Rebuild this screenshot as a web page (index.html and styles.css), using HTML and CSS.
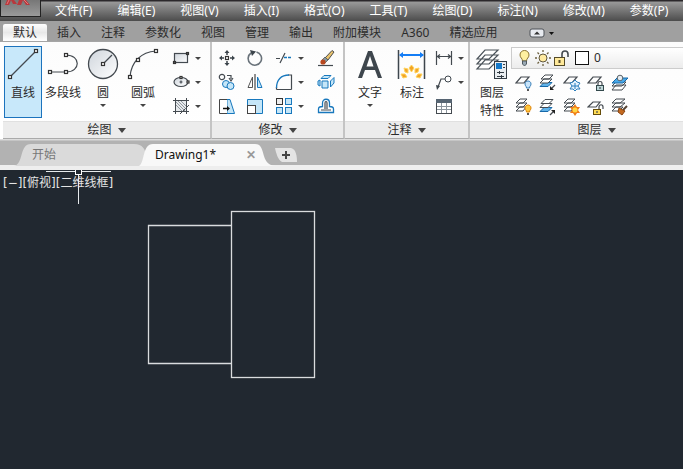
FILE: index.html
```html
<!DOCTYPE html>
<html lang="zh-CN">
<head>
<meta charset="utf-8">
<title>Drawing1</title>
<link rel="stylesheet" href="styles.css">
</head>
<body>
<header class="menubar">
  <button class="app" aria-label="应用程序"><svg width="40" height="16" viewBox="0 0 40 16"><path d="M6 0H10L8 5H4ZM10 0H13L16 4H12ZM18 0H22L20 5H16ZM22 0H25L29 5H25Z" fill="#b8383c"/><path d="M8 0L6 4M23 0L27 4" stroke="#e8797b"/></svg></button>
  <nav class="menus">
    <a href="#">文件(F)</a><a href="#">编辑(E)</a><a href="#">视图(V)</a><a href="#">插入(I)</a><a href="#">格式(O)</a><a href="#">工具(T)</a><a href="#">绘图(D)</a><a href="#">标注(N)</a><a href="#">修改(M)</a><a href="#">参数(P)</a>
  </nav>
</header>
<nav class="tabs">
  <button class="tab on">默认</button><button class="tab">插入</button><button class="tab">注释</button><button class="tab">参数化</button><button class="tab">视图</button><button class="tab">管理</button><button class="tab">输出</button><button class="tab">附加模块</button><button class="tab">A360</button><button class="tab">精选应用</button>
  <button class="collapse" aria-label="最小化"><svg width="26" height="10" viewBox="0 0 26 10"><rect x="1" y="1" width="14" height="8" rx="2" fill="#e8ebf0" stroke="#4e5258"/><path d="M5 6.500L8 3.500L11 6.500Z" fill="#333"/><path d="M20 4H25L22.500 7Z" fill="#111"/></svg></button>
</nav>
<main>
<div class="ribbon">
  <section class="panel draw">
    <div class="tools">
      <button class="big sel"><svg width="38" height="36" viewBox="0 0 38 36"><path d="M6 31L32 5" stroke="#444a50" stroke-width="1.300"/><g class="node"><rect x="4.500" y="29.500" width="3" height="3"/><rect x="30.500" y="3.500" width="3" height="3"/></g></svg><span>直线</span></button>
      <button class="big"><svg width="38" height="36" viewBox="0 0 38 36"><path d="M6 26H22M22 9C37 9 37 26 22 26" class="ln"/><g class="node"><rect x="4.500" y="24.500" width="3" height="3"/><rect x="20.500" y="24.500" width="3" height="3"/><rect x="20.500" y="7.500" width="3" height="3"/></g></svg><span>多段线</span></button>
      <button class="big"><svg width="38" height="36" viewBox="0 0 38 36"><defs><linearGradient id="g" x2="1" y2="1"><stop stop-color="#cfd5dc"/><stop offset="1" stop-color="#fff"/></linearGradient></defs><circle cx="19" cy="18" r="14.500" fill="url(#g)" stroke="#444a50" stroke-width="1.300"/><path d="M19 18L28 9" class="ln"/><g class="node"><rect x="17.500" y="16.500" width="3" height="3"/></g></svg><span>圆</span><i class="dd"></i></button>
      <button class="big"><svg width="38" height="36" viewBox="0 0 38 36"><path d="M6 31C7 16 17 6 32 5" class="ln"/><g class="node"><rect x="4.500" y="29.500" width="3" height="3"/><rect x="12.500" y="12.500" width="3" height="3"/><rect x="30.500" y="3.500" width="3" height="3"/></g></svg><span>圆弧</span><i class="dd"></i></button>
      <div class="grid one">
        <button class="sm" aria-label="矩形"><svg viewBox="0 0 18 18"><rect x="2.500" y="4.500" width="13" height="9" class="ln"/><g class="node"><rect x="1.500" y="12.500" width="2" height="2"/><rect x="14.500" y="3.500" width="2" height="2"/></g></svg><i class="dd"></i></button>
        <button class="sm" aria-label="椭圆"><svg viewBox="0 0 18 18"><ellipse cx="9" cy="9" rx="7" ry="4.500" class="ln"/><path d="M7.500 9H10.500M9 7.500V10.500" class="ln"/><g class="node"><rect x="8" y="3.500" width="2" height="2"/><rect x="15" y="8" width="2" height="2"/></g></svg><i class="dd"></i></button>
        <button class="sm" aria-label="填充"><svg viewBox="0 0 18 18"><rect x="3.500" y="3.500" width="11" height="11" fill="#e6e9ec" stroke="#444a50"/><path d="M1 3.500H17M3.500 1V17M14.500 1V17M1 14.500H17M8 17L17 8" stroke="#444a50" fill="none"/><path d="M4 8L10 14M4 5L13 14M6 4L14 12M9 4L14 9" stroke="#7b838a" stroke-width=".8"/></svg><i class="dd"></i></button>
      </div>
    </div>
    <h2>绘图 <i></i></h2>
  </section>
  <section class="panel modify">
    <div class="tools">
      <div class="grid four">
        <button class="sm" aria-label="移动"><svg viewBox="0 0 18 18"><path d="M9 2V6M9 12V16M2 9H6M12 9H16" stroke="#3c444b" stroke-width="1.500"/><path d="M6.500 4L9 1L11.500 4ZM6.500 14L9 17L11.500 14ZM4 6.500L1 9L4 11.500ZM14 6.500L17 9L14 11.500Z" fill="#3c444b"/><g class="node"><rect x="7.500" y="7.500" width="3" height="3"/></g></svg></button>
        <button class="sm" aria-label="旋转"><svg viewBox="0 0 18 18"><path d="M10.500 3A6.700 6.700 0 1 1 5 4" fill="none" stroke="#69727a" stroke-width="1.600"/><path d="M4 1L10 2.500L6 7Z" fill="#3c444b"/></svg></button>
        <button class="sm" aria-label="修剪"><svg viewBox="0 0 18 18"><path d="M1 9.500H5M5 14L10 4" class="ln"/><path d="M9 8.500H17" class="bl" stroke-dasharray="3 1"/></svg><i class="dd"></i></button>
        <button class="sm" aria-label="删除"><svg viewBox="0 0 18 18"><path d="M1 16.500H16" class="ln"/><path d="M8 9L15 1.500L17 3L11 11Z" fill="#e9c36d" stroke="#4c4c4c"/><path d="M8 8L11 11L8 14L5 11Z" fill="#8597a0" stroke="#4c4c4c" stroke-width=".7"/><circle cx="6" cy="13" r="2.600" fill="#b8481f"/></svg></button>
        <button class="sm" aria-label="复制"><svg viewBox="0 0 18 18"><circle cx="4" cy="4" r="2.700" class="ln"/><circle cx="8" cy="11" r="3.500" class="bf"/><circle cx="12.500" cy="13" r="3.500" class="bf"/><path d="M9 2.500H13V6M11 5L13 8L15 5" class="ln"/></svg></button>
        <button class="sm" aria-label="镜像"><svg viewBox="0 0 18 18"><path d="M9 1V17" stroke="#222"/><path d="M6.500 4V14.500H2Z" fill="none" stroke="#555"/><path d="M11.500 4V14.500H16Z" class="bf"/></svg></button>
        <button class="sm" aria-label="圆角"><svg viewBox="0 0 18 18"><path d="M1.500 16.500V14M16.500 16.500V2H13M1.500 16.500H16.500" class="ln"/><path d="M1.500 15C1.500 7 6 2 14 2" class="bl"/></svg><i class="dd"></i></button>
        <button class="sm" aria-label="分解"><svg viewBox="0 0 18 18"><path d="M5 8H11V15H5ZM4 5.500L7 2.500H14L11 5.500ZM13.500 8L17 4.500V10L13.500 14ZM1 8L3 7V13L1 12Z" class="bf"/></svg></button>
        <button class="sm" aria-label="拉伸"><svg viewBox="0 0 18 18"><path d="M9 2.500H12L16.500 16.500H9Z" class="bf"/><path d="M9 2.500H1.500V16.500H9" fill="#fff" stroke="#444"/><path d="M5 11.500H10" stroke="#111" stroke-width="1.500"/><path d="M9 9L12 11.500L9 14Z" fill="#111"/></svg></button>
        <button class="sm" aria-label="缩放"><svg viewBox="0 0 18 18"><path d="M1.500 2.500H16.500V16.500H9.500V8.500H1.500Z" class="bf"/><rect x="1.500" y="8.500" width="8" height="8" fill="#fff" stroke="#444"/></svg></button>
        <button class="sm" aria-label="阵列"><svg viewBox="0 0 18 18"><rect x="1.500" y="1.500" width="6" height="6" fill="#eee" stroke="#333"/><rect x="10.500" y="1.500" width="6" height="6" class="bf"/><rect x="1.500" y="10.500" width="6" height="6" class="bf"/><rect x="10.500" y="10.500" width="6" height="6" class="bf"/></svg><i class="dd"></i></button>
        <button class="sm" aria-label="偏移"><svg viewBox="0 0 18 18"><path d="M1.500 15.500V12C1.500 10 3 9.500 5.500 9.500V6C5.500 1 12.500 1 12.500 6V9.500C15 9.500 16.500 10 16.500 12V15.500Z" class="bl"/><path d="M4 13H14M8 12V6C8 4 10 4 10 6V12" class="ln"/></svg></button>
      </div>
    </div>
    <h2>修改 <i></i></h2>
  </section>
  <section class="panel note">
    <div class="tools">
      <button class="big"><svg width="38" height="36" viewBox="0 0 38 36"><path d="M7 32L17 5H21L31 32H27L24 24H14L11 32ZM15.500 20.500H22.500L19 10Z" fill="#3e464d"/></svg><span>文字</span><i class="dd"></i></button>
      <button class="big"><svg width="38" height="36" viewBox="0 0 38 36"><path d="M5.500 4V33M31.500 4V33" stroke="#3e464d" stroke-width="1.500"/><path d="M7 9H30" stroke="#147df5" stroke-width="2"/><path d="M6 9L10 6V12ZM31 9L27 6V12Z" fill="#147df5"/><path d="M18.500 19L21 22L18.500 26L16 22ZM11 22L15 23L15 27L12 26ZM26 22L22 23L22 27L25 26ZM8 28L12 28L14 31L10 32ZM29 28L25 28L23 31L27 32Z" fill="#f3a425" stroke="#ffd35c"/></svg><span>标注</span></button>
      <div class="grid one">
        <button class="sm" aria-label="线性"><svg viewBox="0 0 18 18"><path d="M1.500 2V16M16.500 2V16M2 7.500H16M5 5.500L2.500 7.500L5 9.500M13 5.500L15.500 7.500L13 9.500" class="ln"/></svg><i class="dd"></i></button>
        <button class="sm" aria-label="引线"><svg viewBox="0 0 18 18"><path d="M3 14L6 6H10" class="ln"/><path d="M1 12L5 13L2 17Z" fill="#3e464d"/><circle cx="13" cy="6" r="3" fill="#fff" stroke="#3e464d"/></svg><i class="dd"></i></button>
        <button class="sm" aria-label="表格"><svg viewBox="0 0 18 18"><rect x="1.500" y="2.500" width="15" height="14" fill="#fff" stroke="#444a50"/><path d="M1 2H17V6H1Z" fill="#566472"/><path d="M2 9.500H16M2 12.500H16M6.500 6V16M11.500 6V16" stroke="#8b949c"/></svg></button>
      </div>
    </div>
    <h2>注释 <i></i></h2>
  </section>
  <section class="panel layer">
    <div class="tools">
      <button class="big"><svg width="38" height="36" viewBox="0 0 38 36"><g fill="#fff" stroke="#4a5259" stroke-width="1.200"><path d="M4 23L12 14H25L16 23ZM4 18L12 9H25L16 18ZM4 13L12 4H25L16 13Z"/></g><rect x="21.500" y="15.500" width="12" height="17" fill="#e9edf0" stroke="#333c44"/><rect x="23" y="17" width="6" height="6" fill="#1478c8"/><path d="M30 18.500H32M30 21.500H32M24 26.500H31M26.500 25V28M24 30.500H31M28.500 29V32" stroke="#333c44"/></svg><span>图层<br>特性</span></button>
      <div class="stack">
        <button class="combo" aria-label="图层 0">
          <svg width="20" height="20" viewBox="0 0 20 20"><path d="M6 7C6 1 15 1 15 7C15 10 12.500 10 12.500 13H8.500C8.500 10 6 10 6 7Z" fill="#fff0a0" stroke="#8b7330"/><path d="M8.500 13H12.500V16L10.500 18L8.500 16Z" fill="#9aa9b4" stroke="#4e5860"/></svg>
          <svg width="18" height="20" viewBox="0 0 18 20"><circle cx="9" cy="10" r="4" fill="#ffeaa0" stroke="#5d553d"/><path d="M9 2V4M9 16V18M1 10H3M15 10H17M3.500 4.500L5 6M13 14L14.500 15.500M14.500 4.500L13 6M5 14L3.500 15.500" stroke="#6c6040" stroke-width="1.300"/></svg>
          <svg width="20" height="20" viewBox="0 0 20 20"><rect x="2.500" y="9.500" width="10" height="8" fill="#ffe99a" stroke="#544a28"/><path d="M10 9V6C10 2 16 2 16 6V9" fill="none" stroke="#454b50" stroke-width="1.600"/><path d="M7.500 12V15" stroke="#544a28" stroke-width="2"/></svg>
          <span class="swatch"></span><span>0</span>
        </button>
        <div class="grid five">
          <button class="sm" aria-label="关"><svg viewBox="0 0 18 18"><path d="M1 9L6 3H14L9 9Z" class="ln"/><path d="M10 10C10 6 16 6 16 10C16 12 14.500 12 14.500 14H11.500C11.500 12 10 12 10 10Z" fill="#c8e4fa" stroke="#397fb8"/><path d="M12 15H14V17H12Z" fill="#555"/></svg></button>
          <button class="sm" aria-label="隔离"><svg viewBox="0 0 18 18"><path d="M1 12.500L5 8.500H13L9 12.500Z" fill="#61b3ea" stroke="#1768a8"/><path d="M1 9L5 5H13L9 9ZM2 5L6 1H14L10 5Z" fill="#fff" stroke="#444a50"/><path d="M16 11L12 15" class="ln"/><path d="M11 12V16H15Z" fill="#222"/></svg></button>
          <button class="sm" aria-label="冻结"><svg viewBox="0 0 18 18"><path d="M1 9L6 3H14L9 9Z" class="ln"/><path d="M12 6L14 8L17 9L15 12L17 15L14 15L12 17L10 15L7 15L9 12L7 9L10 8Z" fill="#e2f2fd" stroke="#2c7fbd"/><path d="M12 9V15M9 12H15" stroke="#2c7fbd"/></svg></button>
          <button class="sm" aria-label="锁定"><svg viewBox="0 0 18 18"><path d="M1 9L6 3H14L9 9Z" class="ln"/><rect x="9.500" y="11.500" width="7" height="5" fill="#bdd6d8" stroke="#33494c"/><path d="M11 11V9C11 7 15 7 15 9V11M13 13V15" class="ln"/></svg></button>
          <button class="sm" aria-label="置为当前"><svg viewBox="0 0 18 18"><path d="M1 16L5 11H15L11 16ZM1 12L5 8H15L11 12Z" fill="#fff" stroke="#444a50"/><path d="M1 9L6 4H17L12 9Z" fill="#48a9e9" stroke="#1768a8"/><circle cx="9" cy="4" r="2.800" fill="#e5edf2" stroke="#596269"/></svg></button>
          <button class="sm" aria-label="打开"><svg viewBox="0 0 18 18"><path d="M1 13L5 9H11L8 13ZM1 9L5 5H12L8 9ZM1 5L5 1H12L8 5Z" fill="#fff" stroke="#444a50"/><path d="M10 10C10 6 16 6 16 10C16 12 14.500 12 14.500 14H11.500C11.500 12 10 12 10 10Z" fill="#ffc83d" stroke="#df8308"/><path d="M12 15H14V17H12Z" fill="#555"/></svg></button>
          <button class="sm" aria-label="取消隔离"><svg viewBox="0 0 18 18"><path d="M1 13.500L5 9.500H13L9 13.500Z" fill="#61b3ea" stroke="#1768a8"/><path d="M1 9.500L5 5.500H13L9 9.500ZM2 5.500L6 1.500H14L10 5.500Z" fill="#fff" stroke="#444a50"/><path d="M11 17L15 13" class="ln"/><path d="M12 12H16V16Z" fill="#222"/></svg></button>
          <button class="sm" aria-label="解冻"><svg viewBox="0 0 18 18"><path d="M1 13L5 9H11L8 13ZM1 9L5 5H12L8 9ZM1 5L5 1H12L8 5Z" fill="#fff" stroke="#444a50"/><path d="M12 6L14 9L17 9L15 12L17 15L14 15L12 18L10 15L7 15L9 12L7 9L10 9Z" fill="#ef7d18"/><circle cx="12" cy="12" r="2.500" fill="#ffd842"/></svg></button>
          <button class="sm" aria-label="解锁"><svg viewBox="0 0 18 18"><path d="M1 9L6 4H13L9 9Z" class="ln"/><rect x="6.500" y="11.500" width="7" height="5" fill="#ffdc55" stroke="#654c09"/><path d="M12 11V9C12 6 16 6 16 9V11M10 13V15" class="ln"/></svg></button>
          <button class="sm" aria-label="匹配"><svg viewBox="0 0 18 18"><path d="M1 13L5 9H12L8 13ZM1 9L5 5H14L9 9ZM1 5L5 1H14L9 5Z" fill="#fff" stroke="#444a50"/><path d="M16 8L12 12" stroke="#554333" stroke-width="2"/><path d="M8 10L14 13L11 17L7 14Z" fill="#c46a20" stroke="#87420e"/></svg></button>
        </div>
      </div>
    </div>
    <h2>图层 <i></i></h2>
  </section>
</div>
<nav class="files">
  <button class="file"><svg viewBox="0 0 132 22" preserveAspectRatio="none"><path d="M0 22C10 20 5 0 17 0H120C129 0 131 6 132 10V22Z" fill="#dadada"/></svg><span>开始</span></button>
  <button class="file active"><svg viewBox="0 0 138 22" preserveAspectRatio="none"><path d="M0 22C6 19 3 0 14 0H116C128 0 120 20 136 22Z" fill="#f8f8f8"/></svg><span>Drawing1*</span><b>✕</b></button>
  <button class="add" aria-label="新建"><svg width="24" height="16" viewBox="0 0 24 16"><path d="M1 1H17C22 2 23 9 23 15H8C4 13 2 6 1 1Z" fill="#e4e4e4"/><path d="M8 8H16M12 4V12" stroke="#444" stroke-width="2"/></svg></button>
</nav>
<section class="canvas">
  <div class="view">[−][俯视][二维线框]</div>
  <svg class="drawing" width="340" height="240" viewBox="0 0 340 240"><g fill="none" stroke="#dadcde" stroke-width="1.300"><path d="M231.500 55.500H148.500V193.500H231.500"/><rect x="231.500" y="41.500" width="83" height="166"/></g><path d="M46 1.500H111M78.500 4V34" stroke="#e6eaec" fill="none"/><rect x="75.500" y="-.5" width="6" height="5" fill="#212830" stroke="#fff"/></svg>
</section>
</main>
</body>
</html>
```
FILE: styles.css
```css
* { box-sizing: border-box; }
body {
  margin: 0;
  min-height: 100vh;
  display: flex;
  flex-direction: column;
  overflow: hidden;
  background: #212830;
  font: 12px/16px "Noto Sans", "Noto Sans CJK SC", sans-serif;
  color: #2c2c2c;
}
button {
  border: 0;
  padding: 0;
  background: none;
  font: inherit;
  color: inherit;
}
svg { display: block; flex: none; }
main { flex: 1; display: flex; flex-direction: column; }

.menubar {
  display: flex;
  height: 21px;
  background: linear-gradient(#2b282b 0, #2b282b 1px, #999 2px, #4c4c4c 100%);
}
.app {
  width: 41px;
  height: 17px;
  border: 1px solid #222;
  border-top: 0;
  background: linear-gradient(#777, #9a9a9a);
}
.menus { display: flex; gap: 25px; padding: 3px 0 0 14px; white-space: nowrap; }
.menus a { color: #fff; text-decoration: none; }

.tabs {
  display: flex;
  height: 20px;
  padding: 3px 0 0 3px;
  background: #a0a0a0;
  white-space: nowrap;
}
.tab { padding: 0 10px; }
.tab.on {
  background: linear-gradient(#fff, #e8e8e8 50%, #fff);
  border-radius: 2px 2px 0 0;
}
.collapse { margin-left: 22px; }

.ribbon {
  display: flex;
  height: 99px;
  padding-left: 3px;
  background: #fff;
  border-top: 1px solid #a5a5a5;
  border-bottom: 1px solid #ddd;
  overflow: hidden;
}
.panel {
  flex: none;
  display: flex;
  flex-direction: column;
  border-right: 2px solid #c4c4c4;
  border-bottom: 1px solid #aaa;
  background: linear-gradient(#fcfcfc, #fff);
}
.draw { width: 209px; }
.modify { width: 133px; }
.note { width: 125px; }
.layer { flex: 1; border-right: 0; }
.tools { display: flex; flex: 1; padding: 4px 0 0 1px; }
.panel h2 {
  display: flex;
  justify-content: center;
  align-items: center;
  gap: 6px;
  height: 17px;
  margin: 0;
  background: #ececec;
  border-top: 1px solid #e0e0e0;
  font: inherit;
}
.layer h2 { padding-left: 40px; }
h2 i {
  border: 4px solid transparent;
  border-top: 5px solid #444;
  border-bottom: 0;
}
.dd {
  border: 3px solid transparent;
  border-top: 3px solid #444;
  border-bottom: 0;
}
.big {
  width: 38px;
  height: 72px;
  display: flex;
  flex-direction: column;
  align-items: center;
  white-space: nowrap;
}
.big span { margin-top: 2px; line-height: 18px; }
.big .dd { margin-top: 2px; }
.sel { background: #c8e8fa; outline: 1px solid #1c73bd; outline-offset: -1px; }
.draw .tools { gap: 2px; }
.note .tools { gap: 4px; padding-left: 6px; }
.layer .tools { padding-left: 3px; }

.grid { display: grid; grid-auto-rows: 24px; align-content: start; }
.sm { display: flex; align-items: center; }
.sm svg { width: 18px; height: 18px; }
.sm .dd { margin-left: 5px; }
.draw .grid { margin-left: 8px; }
.four { grid-template-columns: 28px 29px 42px 20px; padding-left: 5px; }
.stack { flex: 1; display: flex; flex-direction: column; }
.combo {
  display: flex;
  align-items: center;
  height: 22px;
  margin: 1px 0 2px;
  padding-left: 2px;
  border: 1px solid #ccc;
  border-right: 0;
  background: linear-gradient(#fff, #ececec);
}
.swatch {
  width: 14px;
  height: 14px;
  margin: 0 5px 0 3px;
  border: 1px solid #111;
  background: #fff;
}
.five { grid-template-columns: repeat(5, 24px); padding-left: 4px; }
.ln { fill: none; stroke: #444a50; stroke-width: 1.2; }
ellipse.ln, rect.ln { fill: url(#g); }
.node rect { fill: #fff; stroke: #333; stroke-width: 1.2; }
.bl { fill: none; stroke: #1878bd; stroke-width: 1.3; }
.bf { fill: #c5e6f8; stroke: #1878bd; }

.files {
  display: flex;
  height: 30px;
  padding: 3px 0 0 14px;
  background: #b2b2b2;
  border-top: 1px solid #c5c5c5;
  border-bottom: 5px solid #eee;
}
.file {
  position: relative;
  display: flex;
  align-items: center;
  width: 132px;
  height: 22px;
  padding-left: 18px;
  color: #777;
}
.file svg { position: absolute; inset: 0; width: 100%; height: 100%; }
.file span { position: relative; }
.file.active { width: 138px; margin-left: -7px; padding-left: 16px; color: #111; }
.file b { position: relative; margin-left: 30px; color: #999; }
.add { align-self: center; margin-left: -3px; }

.canvas { position: relative; flex: 1; background: #212830; }
.view {
  padding: 5px 3px;
  color: #e4e4e4;
  font-family: "DejaVu Sans", "Noto Sans CJK SC", sans-serif;
}
.drawing { position: absolute; left: 0; top: 0; }
```
